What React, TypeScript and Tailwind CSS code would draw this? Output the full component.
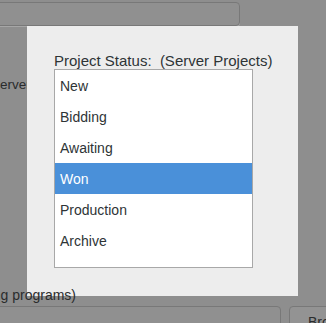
import React from "react";

const items = ["New", "Bidding", "Awaiting", "Won", "Production", "Archive"];

export default function App() {
  return (
    <div className="relative w-[326px] h-[323px] overflow-hidden bg-[#8e8e8e] font-['Liberation_Sans',sans-serif] text-[#2a2c2d]">
      {/* background window (dimmed) */}
      <div className="flex flex-col pt-[2px]">
        <div className="ml-[-8px] h-[24px] w-[248px] rounded-[4px] border border-[#787878] bg-[#909090] shadow-[0_1px_0_#a6a6a6]" />
        <div className="mt-[50px] ml-[-9px] text-[13.5px] leading-[17px] whitespace-nowrap">Server</div>
        <div className="relative z-10 mt-[194px] flex w-[76px] justify-end whitespace-nowrap text-[14px] leading-[17px]">
          (used by existing programs)
        </div>
        <div className="mt-[2px] flex gap-[8px]">
          <div className="ml-[-8px] h-[30px] w-[289px] shrink-0 rounded-[4px] border border-[#787878] bg-[#909090]" />
          <div className="flex h-[30px] w-[60px] shrink-0 items-start rounded-[4px] border border-[#787878] bg-[#939393] pl-[18px] pt-[7px] text-[14px] leading-[17px]">
            Browse
          </div>
        </div>
      </div>

      {/* dialog */}
      <div className="absolute left-[27px] top-[26px] flex h-[270px] w-[271px] flex-col bg-[#ededed] pl-[27px] pt-[26px] text-[#2e3436]">
        <div className="whitespace-pre text-[15px] leading-[17px]">Project Status:  (Server Projects)</div>
        <div className="h-[199px] w-[199px] border border-[#a8a8a8] bg-white">
          {items.map((it) => (
            <div
              key={it}
              className={
                it === "Won"
                  ? "flex h-[31px] items-center bg-[#4a90d9] pl-[5px] pt-[1px] text-[14px] leading-[17px] text-white"
                  : "flex h-[31px] items-center pl-[5px] pt-[1px] text-[14px] leading-[17px]"
              }
            >
              {it}
            </div>
          ))}
        </div>
      </div>
    </div>
  );
}
